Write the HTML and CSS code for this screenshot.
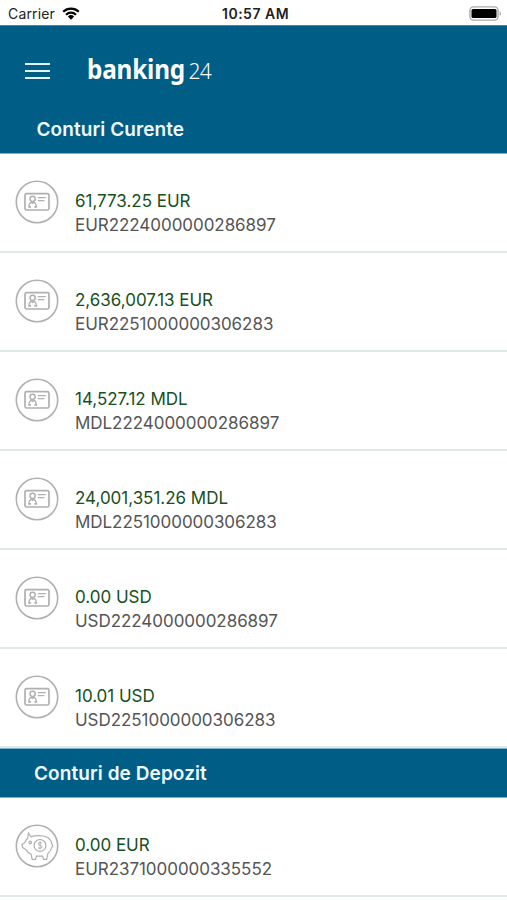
FILE: index.html
```html
<!DOCTYPE html>
<html lang="ro">
<head>
<meta charset="utf-8">
<title>banking 24</title>
<link rel="stylesheet" href="styles.css">
</head>
<body>
<svg width="0" height="0" class="defs" aria-hidden="true">
  <symbol id="card" viewBox="0 0 44 44">
    <circle cx="22" cy="22" r="20.7" stroke-width="1.6"/>
    <rect x="10" y="13.6" width="24" height="16.4" rx="1.6" stroke-width="1.7"/>
    <circle cx="17.6" cy="18.8" r="2.6"/>
    <path d="M13.2 27h2.2v-1M20 26v1h2.2M13.9 27c0-3 .9-4.2 2.6-4.6l1.1 1 1.1-1c1.7.4 2.6 1.6 2.6 4.6M22.8 17.6h8M22.8 20.6h6.6" stroke-width="1.3"/>
  </symbol>
  <symbol id="piggy" viewBox="0 0 44 44">
    <circle cx="22" cy="22" r="20.7" stroke-width="1.6"/>
    <g stroke-width="1.2">
    <path d="M16 12.6l-2.5-3.4-.8 5c-1.3 1.2-2.2 2.6-2.8 4.2L7 20.4l.6 3.2 3.3 2c1.2 2.1 3 3.7 5.3 4.7l.9 5h3.4l.8-3.2h6.4l.9 3.2h3l1.4-6c2-1.5 3.2-3.4 3.7-5.8 1-.9 1.2-2.4.2-3.6-1-5.2-5.6-8-12-8.2-3.5-.1-6.1.1-8.9.9z"/>
    <circle cx="25" cy="21.4" r="5.9"/>
    <circle cx="15.2" cy="18.4" r="1.3"/>
    <path d="M27 19.2c-.5-.8-3.8-1.2-3.8.6 0 1.8 3.8 1.2 3.8 3.2 0 1.8-3.4 1.6-4 .5M25.1 17.4v8" stroke-width="1"/>
    </g>
  </symbol>
</svg>

<div class="status">
  <span class="carrier">Carrier</span>
  <svg class="wifi" viewBox="0 0 18 13"><path class="arc" d="M1.2 4.8a11.2 11.2 0 0 1 15.6 0M4 7.7a7.2 7.2 0 0 1 10 0"/><path d="M5.9 9.5a4.6 4.6 0 0 1 6.2 0L9 12.7z"/></svg>
  <span class="time">10:57 AM</span>
  <svg class="battery" viewBox="0 0 33 15"><rect class="shell" x=".9" y=".9" width="28.2" height="13.2" rx="3.6"/><rect x="2.5" y="2.9" width="25" height="9.2" rx="1.6"/><path class="cap" d="M30.7 5.2c1.7.6 1.7 4 0 4.6z"/></svg>
</div>

<header class="top">
  <div class="bar">
    <div class="menu"><i></i><i></i><i></i></div>
    <div class="brand"><b>banking</b><span>24</span></div>
  </div>
  <h1 class="title">Conturi Curente</h1>
</header>

<ul class="list">
  <li class="row"><svg class="icon"><use href="#card"/></svg><div class="text"><p class="sum">61,773.25 EUR</p><p class="acct">EUR2224000000286897</p></div></li>
  <li class="row"><svg class="icon"><use href="#card"/></svg><div class="text"><p class="sum">2,636,007.13 EUR</p><p class="acct">EUR2251000000306283</p></div></li>
  <li class="row"><svg class="icon"><use href="#card"/></svg><div class="text"><p class="sum">14,527.12 MDL</p><p class="acct">MDL2224000000286897</p></div></li>
  <li class="row"><svg class="icon"><use href="#card"/></svg><div class="text"><p class="sum">24,001,351.26 MDL</p><p class="acct">MDL2251000000306283</p></div></li>
  <li class="row"><svg class="icon"><use href="#card"/></svg><div class="text"><p class="sum">0.00 USD</p><p class="acct">USD2224000000286897</p></div></li>
  <li class="row"><svg class="icon"><use href="#card"/></svg><div class="text"><p class="sum">10.01 USD</p><p class="acct">USD2251000000306283</p></div></li>
</ul>
<h2 class="title section">Conturi de Depozit</h2>
<ul class="list">
  <li class="row"><svg class="icon"><use href="#piggy"/></svg><div class="text"><p class="sum">0.00 EUR</p><p class="acct">EUR2371000000335552</p></div></li>
</ul>
</body>
</html>
```

FILE: styles.css
```css
* { box-sizing: border-box; margin: 0; padding: 0; }
body { width: 507px; height: 900px; overflow: hidden; background: #fff; font-family: Inter, "Liberation Sans", sans-serif; }
.defs { position: absolute; }

.status { height: 25px; padding: 0 5px 0 8px; display: grid; grid-template-columns: 54px 160px 1fr 33px; align-items: center; color: #222; font-size: 14px; line-height: 25px; }
.carrier { padding-top: 1px; letter-spacing: 0.15px; }
.wifi { width: 18px; height: 13px; }
.wifi .arc { fill: none; stroke: #000; stroke-width: 2.2; }
.time { font-weight: 600; padding-top: 1px; letter-spacing: 0.5px; }
.battery { width: 33px; height: 15px; }
.battery .shell { fill: #fff; stroke: #aaa; stroke-width: 1.4; }
.battery .cap { fill: #aaa; }

.top { height: 129px; background: #005d86; color: #fff; border-top: 1px solid #4189a9; border-bottom: 1px solid #7fb2ca; }
.bar { height: 79px; padding: 11px 0 0 25px; display: flex; align-items: center; }
.menu { width: 25px; display: grid; gap: 5px; margin-right: 37px; }
.menu i { height: 2px; background: #e3f3fa; }
.brand { display: flex; align-items: baseline; margin-top: -5px; font-family: "Noto Sans", sans-serif; }
.brand b { width: 101.5px; font-size: 26px; font-weight: 700; letter-spacing: -0.2px; line-height: 34px; transform: scaleX(0.935); transform-origin: 0 50%; }
.brand span { font-size: 21px; font-weight: 300; letter-spacing: -0.8px; }
.title { color: #eefaff; font-size: 19px; font-weight: 600; line-height: 24px; letter-spacing: 0.08px; padding-left: 36.5px; padding-top: 13px; }
.section { height: 50px; padding: 13px 0 0 34px; background: #005d86; border-top: 1px solid #7fb2ca; border-bottom: 1px solid #7fb2ca; }

.list { list-style: none; }
.row { height: 99px; padding: 26px 0 0 15px; display: flex; border-bottom: 2px solid #dcebea; }
.icon { width: 44px; height: 44px; fill: none; stroke: #b0b0b0; stroke-width: 1.5; }
.text { margin: 9px 0 0 16px; }
.sum { color: #17501c; font-size: 17px; line-height: 25px; letter-spacing: -0.02px; }
.acct { color: #555; font-size: 17px; line-height: 23px; letter-spacing: -0.05px; }
```
